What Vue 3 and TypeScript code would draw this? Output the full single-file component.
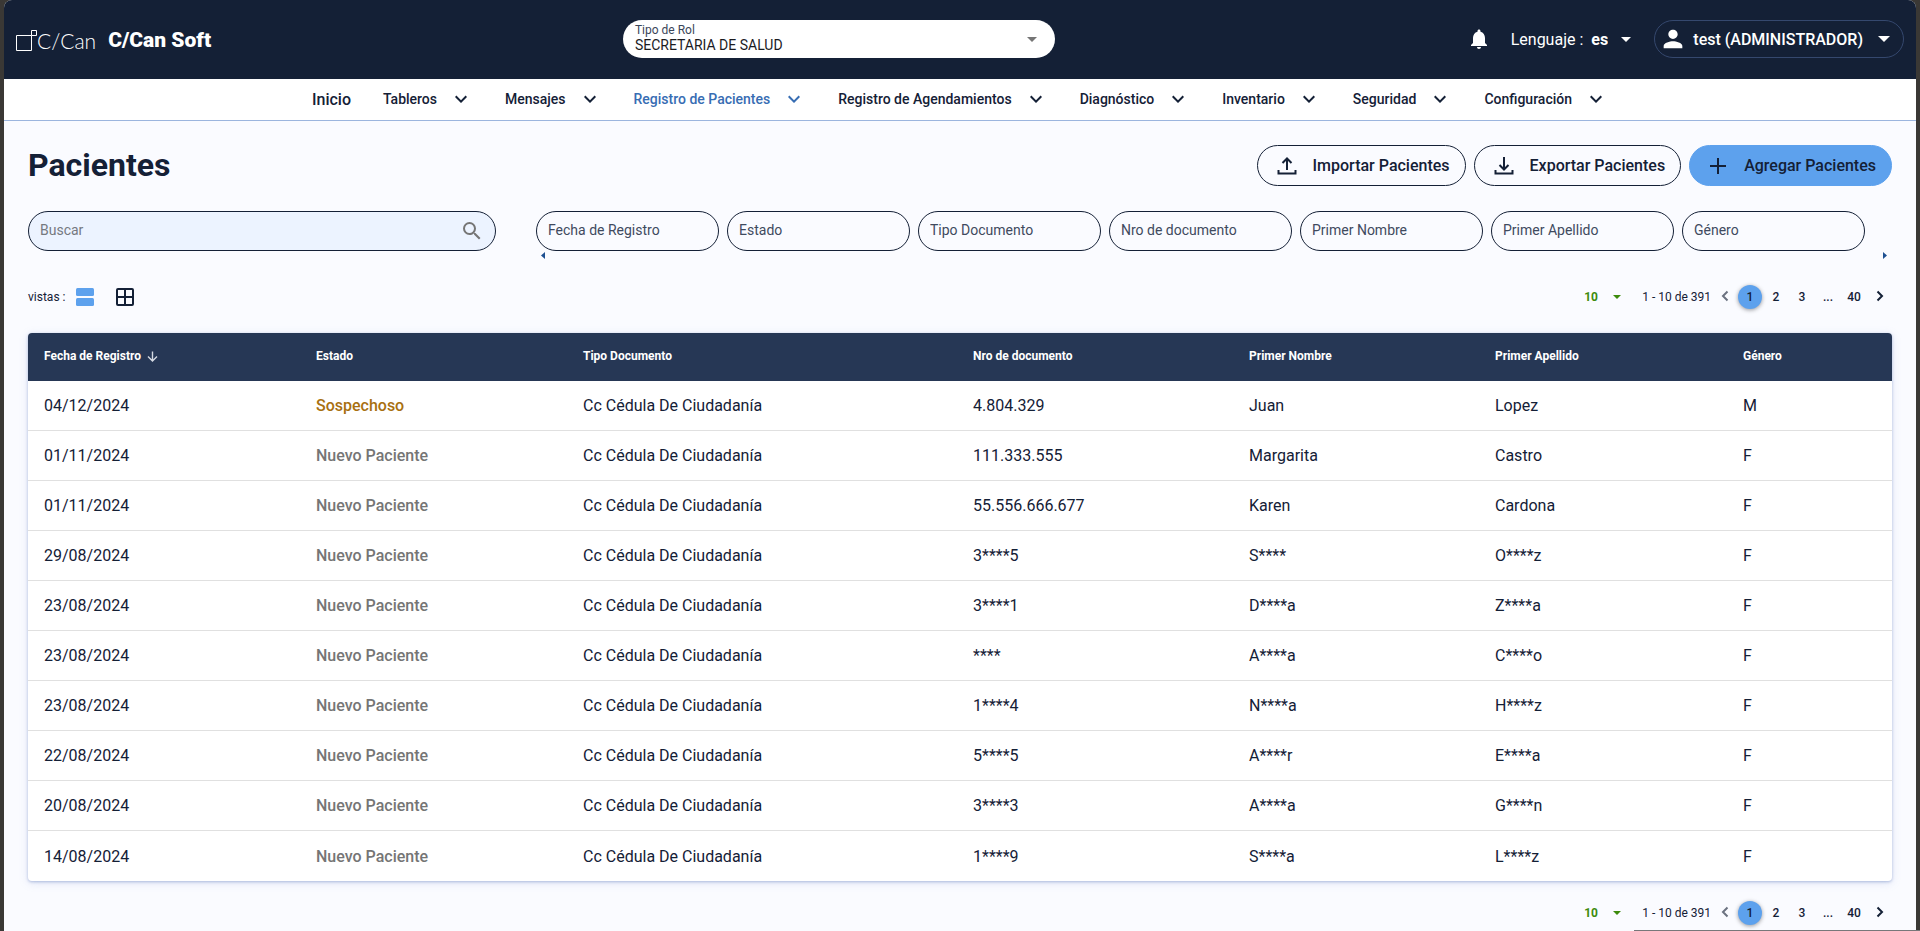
<script setup lang="ts">
import { ref } from 'vue'

interface Patient {
  date: string
  status: string
  docType: string
  docNumber: string
  firstName: string
  lastName: string
  gender: string
}

const menu: string[] = [
  'Tableros',
  'Mensajes',
  'Registro de Pacientes',
  'Registro de Agendamientos',
  'Diagnóstico',
  'Inventario',
  'Seguridad',
  'Configuración',
]
const activeMenu = ref('Registro de Pacientes')

const columns: string[] = [
  'Fecha de Registro',
  'Estado',
  'Tipo Documento',
  'Nro de documento',
  'Primer Nombre',
  'Primer Apellido',
  'Género',
]

const record = (
  date: string,
  docNumber: string,
  firstName: string,
  lastName: string,
  gender = 'F',
  status = 'Nuevo Paciente',
): Patient => ({ date, status, docType: 'Cc Cédula De Ciudadanía', docNumber, firstName, lastName, gender })

const patients: Patient[] = [
  record('04/12/2024', '4.804.329', 'Juan', 'Lopez', 'M', 'Sospechoso'),
  record('01/11/2024', '111.333.555', 'Margarita', 'Castro'),
  record('01/11/2024', '55.556.666.677', 'Karen', 'Cardona'),
  record('29/08/2024', '3****5', 'S****', 'O****z'),
  record('23/08/2024', '3****1', 'D****a', 'Z****a'),
  record('23/08/2024', '****', 'A****a', 'C****o'),
  record('23/08/2024', '1****4', 'N****a', 'H****z'),
  record('22/08/2024', '5****5', 'A****r', 'E****a'),
  record('20/08/2024', '3****3', 'A****a', 'G****n'),
  record('14/08/2024', '1****9', 'S****a', 'L****z'),
]

const role = ref('SECRETARIA DE SALUD')
const language = ref('es')
const pageSize = ref(10)
const page = ref(1)
const search = ref('')
</script>

<template>
  <div class="shell">
    <header class="topbar">
      <div class="brand">
        <span class="logo">
          <svg width="21" height="21" viewBox="0 0 21 21" fill="none" stroke="#fff" aria-hidden="true">
            <path d="M15.500 5.500H.5v15h15z" />
            <path d="M15.500 .5h5v5h-5z" />
          </svg>
          <span class="logo-text">C/Can</span>
        </span>
        <strong class="product">C/Can Soft</strong>
      </div>

      <div class="role">
        <label for="role">Tipo de Rol</label>
        <select id="role" v-model="role">
          <option>SECRETARIA DE SALUD</option>
        </select>
        <svg class="role-caret" width="10" height="5" viewBox="0 0 10 5" aria-hidden="true"><path d="M0 0h10L5 5z" fill="#757575" /></svg>
      </div>

      <div class="account">
        <button class="bell" type="button" aria-label="Notificaciones">
          <svg width="24" height="24" viewBox="0 0 24 24" fill="#fff"><path d="M12 22c1.100 0 2-.9 2-2h-4c0 1.100.89 2 2 2zm6-6v-5c0-3.070-1.640-5.640-4.500-6.320V4c0-.83-.67-1.500-1.500-1.500s-1.500.67-1.500 1.500v.68C7.630 5.360 6 7.920 6 11v5l-2 2v1h16v-1l-2-2z" /></svg>
        </button>
        <div class="language">
          <label for="lang">Lenguaje :</label>
          <span class="pick">
            <select id="lang" v-model="language"><option>es</option></select>
            <svg width="10" height="5" viewBox="0 0 10 5" aria-hidden="true"><path d="M0 0h10L5 5z" fill="#fff" /></svg>
          </span>
        </div>
        <button class="user" type="button">
          <svg width="28" height="28" viewBox="0 0 24 24" fill="#fff" aria-hidden="true"><path d="M12 12c2.210 0 4-1.790 4-4s-1.790-4-4-4-4 1.790-4 4 1.790 4 4 4zm0 2c-2.670 0-8 1.340-8 4v2h16v-2c0-2.660-5.330-4-8-4z" /></svg>
          <span class="user-name">test (ADMINISTRADOR)</span>
          <svg width="12" height="6" viewBox="0 0 12 6" aria-hidden="true"><path d="M0 0h12L6 6z" fill="#fff" /></svg>
        </button>
      </div>
    </header>

    <nav class="menu">
      <a class="home" href="#">Inicio</a>
      <button
        v-for="item in menu"
        :key="item"
        type="button"
        :class="{ active: item === activeMenu }"
        @click="activeMenu = item"
      >
        {{ item }}
        <svg width="24" height="24" viewBox="0 0 24 24" fill="currentColor" aria-hidden="true"><path d="M16.590 8.590 12 13.170 7.410 8.590 6 10l6 6 6-6z" /></svg>
      </button>
    </nav>

    <main>
      <div class="heading">
        <h1>Pacientes</h1>
        <div class="actions">
          <button type="button">
            <svg width="24" height="24" viewBox="0 0 24 24" fill="none" stroke="currentColor" stroke-width="2" aria-hidden="true"><path d="M12 16V5M7.500 9 12 4.500 16.500 9M3.500 16v3.500h17V16" /></svg>
            Importar Pacientes
          </button>
          <button type="button">
            <svg width="24" height="24" viewBox="0 0 24 24" fill="none" stroke="currentColor" stroke-width="2" aria-hidden="true"><path d="M12 3v12M7.500 11 12 15.500 16.500 11M3.500 16v3.500h17V16" /></svg>
            Exportar Pacientes
          </button>
          <button type="button" class="primary">
            <svg width="24" height="24" viewBox="0 0 24 24" fill="none" stroke="currentColor" stroke-width="2" aria-hidden="true"><path d="M12 4v16M4 12h16" /></svg>
            Agregar Pacientes
          </button>
        </div>
      </div>

      <div class="filters">
        <div class="search">
          <input v-model="search" type="text" placeholder="Buscar" aria-label="Buscar" />
          <svg width="24" height="24" viewBox="0 0 24 24" fill="#757575" aria-hidden="true"><path d="M15.500 14h-.79l-.28-.27A6.470 6.470 0 0 0 16 9.500 6.500 6.500 0 1 0 9.500 16c1.610 0 3.090-.59 4.230-1.570l.27.28v.79l5 4.990L20.490 19l-4.990-5zm-6 0C7.010 14 5 11.990 5 9.500S7.010 5 9.500 5 14 7.010 14 9.500 11.990 14 9.500 14z" /></svg>
        </div>
        <div class="scroller">
          <div class="fields">
            <input v-for="column in columns" :key="column" type="text" :placeholder="column" :aria-label="column" />
          </div>
          <div class="arrows" aria-hidden="true">
            <svg width="4" height="7" viewBox="0 0 4 7"><path d="M4 0v7L0 3.500z" fill="#1d4f91" /></svg>
            <svg width="4" height="7" viewBox="0 0 4 7"><path d="M0 0v7l4-3.500z" fill="#1d4f91" /></svg>
          </div>
        </div>
      </div>

      <div class="toolbar">
        <div class="views">
          <span>vistas :</span>
          <button type="button" aria-label="Vista de lista">
            <svg width="18" height="18" viewBox="0 0 18 18" fill="#5da1ed"><rect width="18" height="8" rx="1.500" /><rect y="10" width="18" height="8" rx="1.500" /></svg>
          </button>
          <button type="button" aria-label="Vista de cuadrícula">
            <svg width="18" height="18" viewBox="0 0 18 18" fill="none" stroke="#142036" stroke-width="2"><rect x="1" y="1" width="16" height="16" rx="1" /><path d="M9 1v16M1 9h16" /></svg>
          </button>
        </div>
        <div class="pager">
          <span class="pick">
            <select v-model="pageSize" aria-label="Filas por página"><option :value="10">10</option></select>
            <svg width="8" height="4" viewBox="0 0 8 4" aria-hidden="true"><path d="M0 0h8L4 4z" fill="#3d8b0d" /></svg>
          </span>
          <span class="range">1 - 10 de 391</span>
          <button type="button" class="step previous" aria-label="Anterior"><svg width="8" height="12" viewBox="0 0 8 12"><path d="M6.500 1.500 2 6l4.500 4.500" /></svg></button>
          <button v-for="n in [1, 2, 3]" :key="n" type="button" :class="{ current: n === page }" @click="page = n">{{ n }}</button>
          <span class="dots">...</span>
          <button type="button">40</button>
          <button type="button" class="step next" aria-label="Siguiente"><svg width="8" height="12" viewBox="0 0 8 12"><path d="M1.500 1.500 6 6l-4.500 4.500" /></svg></button>
        </div>
      </div>

      <table>
        <colgroup>
          <col v-for="(column, i) in columns" :key="column" :class="'col-' + i" />
        </colgroup>
        <thead>
          <tr>
            <th v-for="(column, i) in columns" :key="column" scope="col">
              {{ column }}
              <svg v-if="i === 0" width="11" height="11" viewBox="0 0 11 11" fill="none" stroke="#d5dae3" stroke-width="1.400" aria-hidden="true"><path d="M5.500 .5v9M1 5.500 5.500 10 10 5.500" /></svg>
            </th>
          </tr>
        </thead>
        <tbody>
          <tr v-for="(p, i) in patients" :key="i">
            <td>{{ p.date }}</td>
            <td class="status" :class="{ suspect: p.status === 'Sospechoso' }">{{ p.status }}</td>
            <td>{{ p.docType }}</td>
            <td>{{ p.docNumber }}</td>
            <td>{{ p.firstName }}</td>
            <td>{{ p.lastName }}</td>
            <td>{{ p.gender }}</td>
          </tr>
        </tbody>
      </table>

      <div class="toolbar bottom">
        <div class="pager">
          <span class="pick">
            <select v-model="pageSize" aria-label="Filas por página"><option :value="10">10</option></select>
            <svg width="8" height="4" viewBox="0 0 8 4" aria-hidden="true"><path d="M0 0h8L4 4z" fill="#3d8b0d" /></svg>
          </span>
          <span class="range">1 - 10 de 391</span>
          <button type="button" class="step previous" aria-label="Anterior"><svg width="8" height="12" viewBox="0 0 8 12"><path d="M6.500 1.500 2 6l4.500 4.500" /></svg></button>
          <button v-for="n in [1, 2, 3]" :key="n" type="button" :class="{ current: n === page }" @click="page = n">{{ n }}</button>
          <span class="dots">...</span>
          <button type="button">40</button>
          <button type="button" class="step next" aria-label="Siguiente"><svg width="8" height="12" viewBox="0 0 8 12"><path d="M1.500 1.500 6 6l-4.500 4.500" /></svg></button>
        </div>
      </div>
    </main>
    <div class="overlay-edge"></div>
  </div>
</template>

<style>
body {
  background: #3a3835;
}
</style>

<style scoped>
.shell,
.shell * {
  box-sizing: border-box;
}
.shell {
  min-height: 100vh;
  margin: 0 4px;
  border-radius: 8px 8px 0 0;
  background: #fafbff;
  color: #142036;
  font-family: Roboto, "Liberation Sans", sans-serif;
  font-size: 16px;
  overflow: hidden;
}
button,
input,
select {
  font: inherit;
  color: inherit;
  background: none;
  border: 0;
  padding: 0;
  margin: 0;
}
select {
  appearance: none;
}
svg {
  display: block;
  flex: none;
}

.topbar {
  display: flex;
  justify-content: space-between;
  align-items: center;
  height: 79px;
  padding: 0 12px 1px;
  background: #142036;
  color: #fff;
}
.brand {
  display: flex;
  align-items: center;
  gap: 12px;
  padding-top: 2px;
}
.logo {
  display: flex;
  align-items: flex-end;
}
.logo-text {
  font-family: Lato, sans-serif;
  font-weight: 300;
  font-size: 21px;
  line-height: 21px;
}
.product {
  font-size: 21px;
  font-weight: 900;
}
.role {
  position: relative;
  flex: 0 1 432px;
  height: 38px;
  padding: 3px 12px 2px;
  border-radius: 19px;
  background: #fff;
  color: #142036;
}
.role label {
  display: block;
  font-size: 12px;
  line-height: 14px;
  color: #3b465a;
}
.role select {
  display: block;
  width: 100%;
  font-size: 14px;
  line-height: 16px;
  color: #1b1b1f;
}
.role-caret {
  position: absolute;
  right: 18px;
  top: 17px;
}
.account {
  display: flex;
  align-items: center;
  justify-content: flex-end;
}
.language {
  display: flex;
  align-items: center;
  gap: 8px;
  margin: 0 23px 0 20px;
}
.pick {
  display: flex;
  align-items: center;
}
.language .pick {
  gap: 13px;
}
.language select {
  font-weight: 700;
}
.user {
  display: flex;
  align-items: center;
  height: 38px;
  padding: 0 13px 0 4px;
  border: 1px solid #35486e;
  border-radius: 19px;
  font-weight: 500;
}
.user-name {
  margin: 0 15px 0 6px;
}

.menu {
  display: flex;
  align-items: center;
  justify-content: center;
  gap: 32px;
  height: 42px;
  padding-bottom: 1px;
  background: #fff;
  border-bottom: 1px solid #9bb5de;
}
.menu a {
  color: inherit;
  font-weight: 500;
  text-decoration: none;
}
.menu button {
  display: flex;
  align-items: center;
  gap: 12px;
  font-size: 14px;
  font-weight: 500;
}
.menu .active {
  color: #376db3;
}

main {
  padding: 24px 24px 0;
}
.heading,
.toolbar {
  display: flex;
  align-items: center;
  justify-content: space-between;
}
h1 {
  margin: 0;
  padding-bottom: 2px;
  font-size: 32px;
  line-height: 38px;
  font-weight: 700;
}
.actions {
  display: flex;
  gap: 8px;
}
.actions button {
  display: flex;
  align-items: center;
  gap: 14px;
  height: 41px;
  padding: 0 15px 0 17px;
  border: 1px solid #142036;
  border-radius: 21px;
  font-weight: 500;
}
.actions .primary {
  padding-left: 16px;
  background: #5da1ed;
  border-color: #5da1ed;
}

.filters {
  display: flex;
  gap: 40px;
  margin-top: 25px;
}
.search,
.fields input {
  height: 40px;
  border: 1px solid #142036;
  border-radius: 20px;
  font-size: 14px;
}
.search {
  display: flex;
  align-items: center;
  flex: 0 0 468px;
  padding: 0 11px;
  background: #ecf3ff;
}
.search input {
  flex: 1;
  padding-bottom: 2px;
  outline: none;
}
input::placeholder {
  color: #3f4a5e;
  opacity: 1;
}
.search input::placeholder {
  color: #75797f;
}
.scroller {
  flex: 1;
  min-width: 0;
}
.fields {
  display: flex;
  gap: 8px;
  padding-right: 27px;
}
.fields input {
  flex: 1;
  min-width: 0;
  padding: 0 11px 2px;
}
.arrows {
  display: flex;
  justify-content: space-between;
  padding: 1px 5px;
}

.toolbar {
  margin-top: 23px;
  height: 28px;
  font-size: 12px;
}
.views {
  display: flex;
  align-items: center;
}
.views button {
  margin-left: 11px;
}
.views button + button {
  margin-left: 22px;
}
.pager {
  display: flex;
  align-items: center;
  gap: 2px;
  margin-left: auto;
}
.pager .pick {
  gap: 15px;
  margin-right: 19px;
}
.pager select {
  font-weight: 700;
  color: #3d8b0d;
}
.pager button,
.dots {
  width: 24px;
  height: 24px;
  border-radius: 12px;
  font-weight: 500;
  line-height: 24px;
  text-align: center;
}
.pager .current {
  background: #5da1ed;
  box-shadow: 0 1px 4px rgba(0, 0, 0, 0.4);
}
.pager .step {
  display: flex;
  align-items: center;
  justify-content: center;
  padding-bottom: 2px;
}
.pager .previous {
  width: 23px;
}
.step path {
  fill: none;
  stroke: #142036;
  stroke-width: 2;
}
.previous path {
  stroke: #6b7280;
}

table {
  width: 100%;
  margin-top: 22px;
  border-collapse: separate;
  border-spacing: 0;
  table-layout: fixed;
  background: #fff;
  border-radius: 4px;
  box-shadow: 0 1px 3px rgba(80, 110, 180, 0.4), 0 2px 10px rgba(120, 145, 210, 0.2);
  overflow: hidden;
}
.col-0 { width: 272px; }
.col-1 { width: 267px; }
.col-2 { width: 390px; }
.col-3 { width: 276px; }
.col-4 { width: 246px; }
.col-5 { width: 248px; }
th {
  height: 48px;
  padding: 0 16px 2px;
  background: #263755;
  color: #fff;
  font-size: 12px;
  font-weight: 700;
  text-align: left;
}
th svg {
  display: inline-block;
  margin-left: 3px;
  vertical-align: -2px;
}
td {
  height: 50px;
  padding: 0 16px;
  border-bottom: 1px solid #e0e0e0;
}
tbody tr:last-child td {
  border-bottom: 0;
}
.status {
  color: #757575;
  font-weight: 500;
}
.suspect {
  color: #a87010;
}
.toolbar.bottom {
  margin-top: 18px;
}
.overlay-edge {
  position: fixed;
  right: 0;
  bottom: 0;
  width: 286px;
  height: 1px;
  background: #77777a;
}
</style>
